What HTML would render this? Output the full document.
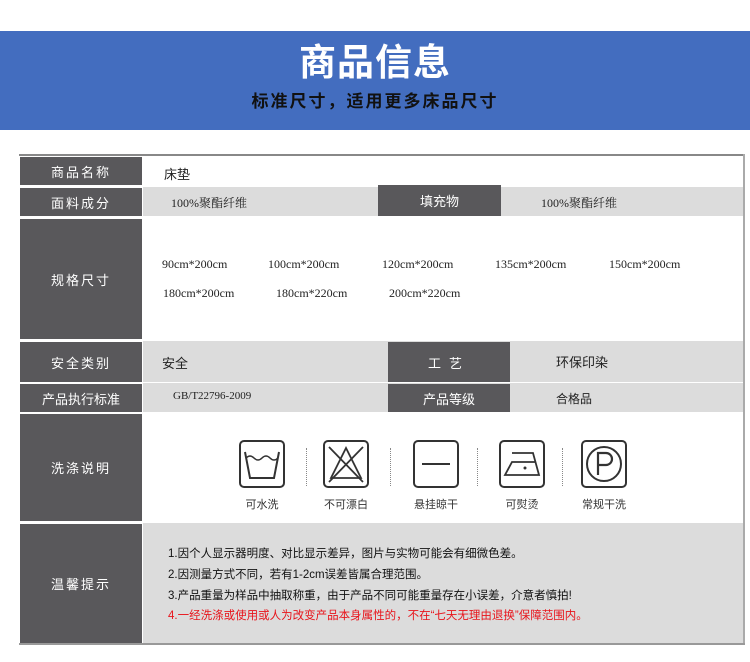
<!DOCTYPE html>
<html><head><meta charset="utf-8"><style>
*{margin:0;padding:0;box-sizing:border-box}
body{width:750px;height:662px;background:#fff;position:relative;overflow:hidden;font-family:"Liberation Sans","Noto Sans CJK SC",sans-serif}
.a{position:absolute}
.d{position:absolute;background:#59585b;color:#fff;font-size:13px;display:flex;align-items:center;justify-content:center;letter-spacing:2px}
.g{position:absolute;background:#dcdcdc}
.t{position:absolute;font-size:12px;color:#222;font-family:"Liberation Serif","Noto Serif CJK SC",serif;white-space:nowrap}
.ic{position:absolute;width:46px;height:48px;border:2px solid #333;border-radius:5px}
.sep{position:absolute;width:0;height:38px;border-left:1.5px dotted #888;top:448px}
.lb{position:absolute;font-size:11px;color:#333;top:496px;width:60px;text-align:center}
.n{position:absolute;left:168px;font-size:11.5px;color:#111;white-space:nowrap}
</style></head><body>
<div class="a" style="left:0;top:31px;width:750px;height:99px;background:#436dbf"></div>
<div class="a" style="left:0;top:40px;width:750px;text-align:center;color:#fff;font-size:37px;font-weight:bold;letter-spacing:1px;line-height:46px">商品信息</div>
<div class="a" style="left:0;top:91px;width:750px;text-align:center;color:#111;font-size:17px;font-weight:bold;letter-spacing:2px;line-height:22px">标准尺寸，适用更多床品尺寸</div>

<div class="a" style="left:19px;top:154px;width:726px;height:2px;background:#888"></div>
<div class="a" style="left:743px;top:154px;width:2px;height:491px;background:#aaa"></div>
<div class="a" style="left:19px;top:643px;width:726px;height:2px;background:#999"></div>

<div class="g" style="left:143px;top:187px;width:600px;height:29px"></div>
<div class="g" style="left:143px;top:341px;width:600px;height:41px"></div>
<div class="g" style="left:143px;top:383px;width:600px;height:29px"></div>
<div class="g" style="left:143px;top:523px;width:600px;height:120px"></div>

<div class="d" style="left:20px;top:157px;width:122px;height:28px">商品名称</div>
<div class="d" style="left:20px;top:188px;width:122px;height:28px">面料成分</div>
<div class="d" style="left:20px;top:219px;width:122px;height:120px">规格尺寸</div>
<div class="d" style="left:20px;top:342px;width:122px;height:40px">安全类别</div>
<div class="d" style="left:20px;top:384px;width:122px;height:28px;letter-spacing:0">产品执行标准</div>
<div class="d" style="left:20px;top:414px;width:122px;height:107px">洗涤说明</div>
<div class="d" style="left:20px;top:524px;width:122px;height:119px">温馨提示</div>

<div class="d" style="left:378px;top:185px;width:123px;height:31px;letter-spacing:0">填充物</div>
<div class="d" style="left:388px;top:342px;width:122px;height:40px;letter-spacing:8px">工艺</div>
<div class="d" style="left:388px;top:384px;width:122px;height:28px;letter-spacing:0">产品等级</div>

<div class="t" style="left:164px;top:164px;font-family:'Liberation Sans','Noto Sans CJK SC',sans-serif;font-size:13px">床垫</div>
<div class="t" style="left:171px;top:194px">100%聚酯纤维</div>
<div class="t" style="left:541px;top:194px">100%聚酯纤维</div>
<div class="t" style="left:162px;top:257px">90cm*200cm</div>
<div class="t" style="left:268px;top:257px">100cm*200cm</div>
<div class="t" style="left:382px;top:257px">120cm*200cm</div>
<div class="t" style="left:495px;top:257px">135cm*200cm</div>
<div class="t" style="left:609px;top:257px">150cm*200cm</div>
<div class="t" style="left:163px;top:286px">180cm*200cm</div>
<div class="t" style="left:276px;top:286px">180cm*220cm</div>
<div class="t" style="left:389px;top:286px">200cm*220cm</div>
<div class="t" style="left:162px;top:353px;font-family:'Liberation Sans','Noto Sans CJK SC',sans-serif;font-size:13px">安全</div>
<div class="t" style="left:556px;top:352px;font-family:'Liberation Sans','Noto Sans CJK SC',sans-serif;font-size:13px">环保印染</div>
<div class="t" style="left:173px;top:390px;font-size:11px">GB/T22796-2009</div>
<div class="t" style="left:556px;top:390px;font-family:'Liberation Sans','Noto Sans CJK SC',sans-serif;font-size:12px">合格品</div>

<!-- icons -->
<div class="ic" style="left:239px;top:440px">
<svg width="42" height="44" viewBox="0 0 42 44"><path d="M4 10 L9 36 L33 36 L38 10" fill="none" stroke="#333" stroke-width="2"/><path d="M5 16 q4 -4 8 0 q4 4 8 0 q4 -4 8 0 q4 4 8 0" fill="none" stroke="#333" stroke-width="1.5"/></svg></div>
<div class="sep" style="left:306px"></div>
<div class="ic" style="left:323px;top:440px">
<svg width="42" height="44" viewBox="0 0 42 44"><path d="M21 6 L6 36 L36 36 Z" fill="none" stroke="#333" stroke-width="1.8"/><path d="M4 5 L38 40 M38 5 L4 40" stroke="#333" stroke-width="1.8"/></svg></div>
<div class="sep" style="left:390px"></div>
<div class="ic" style="left:413px;top:440px">
<svg width="42" height="44" viewBox="0 0 42 44"><path d="M7 22 H35" stroke="#333" stroke-width="2"/></svg></div>
<div class="sep" style="left:477px"></div>
<div class="ic" style="left:499px;top:440px">
<svg width="42" height="44" viewBox="0 0 42 44"><path d="M11 11 H32 L38 33 H4 L11 20 H34" fill="none" stroke="#333" stroke-width="1.8"/><circle cx="24" cy="26" r="1.5" fill="#333"/></svg></div>
<div class="sep" style="left:562px"></div>
<div class="ic" style="left:581px;top:440px">
<svg width="42" height="44" viewBox="0 0 42 44"><circle cx="21" cy="22" r="17" fill="none" stroke="#333" stroke-width="2"/><path d="M15 33 V11 H23 a6 6 0 0 1 0 12 H15" fill="none" stroke="#333" stroke-width="2.2"/></svg></div>
<div class="lb" style="left:232px">可水洗</div>
<div class="lb" style="left:316px">不可漂白</div>
<div class="lb" style="left:406px">悬挂晾干</div>
<div class="lb" style="left:492px">可熨烫</div>
<div class="lb" style="left:574px">常规干洗</div>

<div class="n" style="top:545px">1.因个人显示器明度、对比显示差异，图片与实物可能会有细微色差。</div>
<div class="n" style="top:566px">2.因测量方式不同，若有1-2cm误差皆属合理范围。</div>
<div class="n" style="top:587px">3.产品重量为样品中抽取称重，由于产品不同可能重量存在小误差，介意者慎拍!</div>
<div class="n" style="top:607px;color:#e8141b">4.一经洗涤或使用或人为改变产品本身属性的，不在“七天无理由退换”保障范围内。</div>
</body></html>
